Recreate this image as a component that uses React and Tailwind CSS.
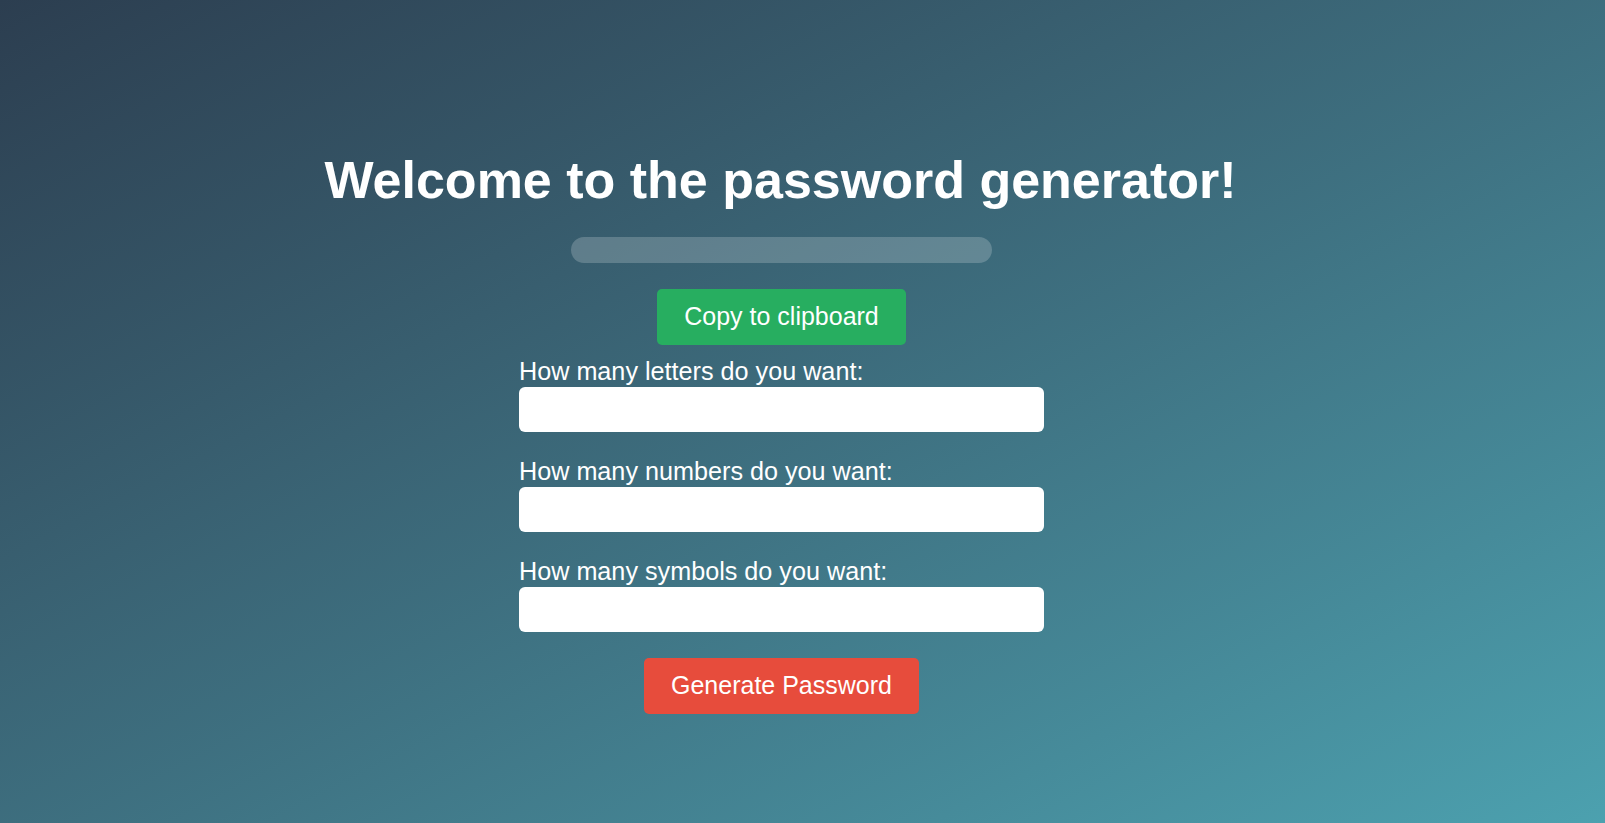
import { useState } from "react"

const FIELDS = [
  { id: "letters", label: "How many letters do you want:" },
  { id: "numbers", label: "How many numbers do you want:" },
  { id: "symbols", label: "How many symbols do you want:" },
]

export default function App() {
  const [values, setValues] = useState({ letters: "", numbers: "", symbols: "" })

  return (
    <div className="min-h-screen w-full bg-gradient-to-br from-[#2c3e50] to-[#4ca1af] font-['Liberation_Sans',Arial,sans-serif] text-white">
      <div className="flex flex-col items-center pt-[150px] pr-[44px]">
        <h1 className="text-[52px] font-bold leading-[60px]">Welcome to the password generator!</h1>

        {/* password output */}
        <div className="mt-[27px] ml-[2px] h-[26px] w-[421px] rounded-full bg-white/20" />

        <button className="mt-[26px] ml-[2px] h-[56px] rounded-[5px] bg-[#27ae60] px-[27px] text-[25px]">
          Copy to clipboard
        </button>

        <div className="mt-[12px] ml-[2px] flex w-[525px] flex-col gap-[25px]">
          {FIELDS.map((f) => (
            <div key={f.id} className="flex flex-col">
              <label htmlFor={f.id} className="text-[25.2px] leading-[29px]">
                {f.label}
              </label>
              <input
                id={f.id}
                type="number"
                value={values[f.id]}
                onChange={(e) => setValues({ ...values, [f.id]: e.target.value })}
                className="mt-px h-[45px] w-full rounded-[6px] bg-white px-3 text-[20px] text-black outline-none"
              />
            </div>
          ))}
        </div>

        <button className="mt-[26px] ml-[2px] h-[56px] rounded-[5px] bg-[#e74c3c] px-[27px] text-[25px]">
          Generate Password
        </button>
      </div>
    </div>
  )
}
